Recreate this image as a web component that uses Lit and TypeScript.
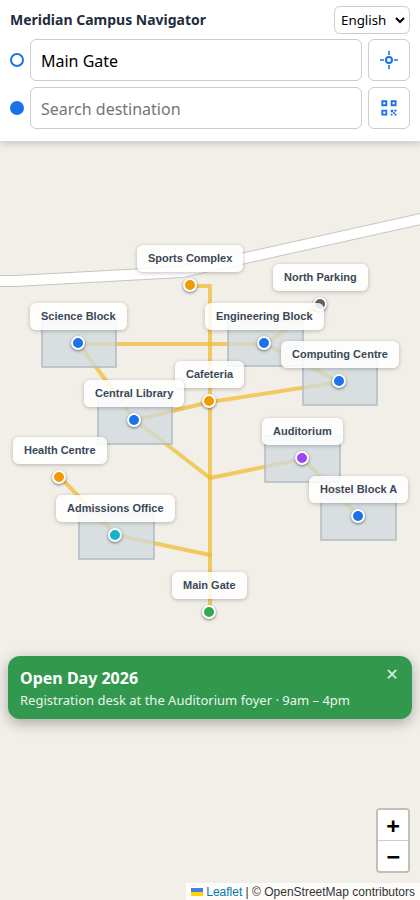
import { LitElement, html, svg, css } from "lit";
import { customElement, property, state } from "lit/decorators.js";

interface Place {
  name: string;
  x: number;
  y: number;
  kind: string;
  building?: [number, number, number, number];
}

const PLACES: Place[] = [
  { name: "Sports Complex", x: 190, y: 285, kind: "amenity" },
  { name: "North Parking", x: 320, y: 304, kind: "parking" },
  { name: "Science Block", x: 78, y: 343, kind: "academic", building: [42, 321, 74, 46] },
  { name: "Engineering Block", x: 264, y: 343, kind: "academic", building: [228, 321, 75, 45] },
  { name: "Computing Centre", x: 339, y: 381, kind: "academic", building: [303, 359, 74, 46] },
  { name: "Cafeteria", x: 209, y: 401, kind: "amenity" },
  { name: "Central Library", x: 134, y: 420, kind: "academic", building: [98, 398, 74, 46] },
  { name: "Auditorium", x: 302, y: 458, kind: "venue", building: [265, 436, 75, 46] },
  { name: "Health Centre", x: 59, y: 477, kind: "amenity" },
  { name: "Hostel Block A", x: 358, y: 516, kind: "academic", building: [321, 494, 75, 46] },
  { name: "Admissions Office", x: 115, y: 535, kind: "office", building: [79, 513, 75, 46] },
  { name: "Main Gate", x: 209, y: 612, kind: "gate" },
];

const PATHS = [
  "M210 612V286H191",
  "M79 344H265",
  "M79 344L135 420L210 478L303 459L359 516",
  "M135 420L210 402L340 382L265 344L321 305",
  "M60 477L116 535L210 555",
];

const ROAD = "M-10 281H15L182 272L430 217";

@customElement("campus-map")
class CampusMap extends LitElement {
  static styles = css`
    :host {
      display: block;
      position: relative;
      overflow: hidden;
      background: #f2efe9;
      font: 12px/18px "Liberation Sans", Arial, sans-serif;
    }
    .canvas {
      position: absolute;
      top: 0;
      left: 50%;
      width: 420px;
      height: 900px;
      margin-left: -210px;
    }
    .ground {
      position: absolute;
      inset: 0;
      overflow: visible;
      fill: none;
      stroke-linecap: round;
      stroke-linejoin: round;
    }
    .casing { stroke: #c4c4c1; stroke-width: 12; }
    .road { stroke: #fff; stroke-width: 10; }
    .path { stroke: #f0b929; stroke-opacity: 0.7; stroke-width: 4; }
    .building {
      fill: #d0d9de;
      fill-opacity: 0.75;
      stroke: #b0bec5;
      stroke-opacity: 0.8;
      stroke-width: 2;
    }
    .pin {
      position: absolute;
      box-sizing: border-box;
      width: 14px;
      height: 14px;
      margin: -7px 0 0 -7px;
      padding: 0;
      border: 2px solid #fff;
      border-radius: 50%;
      box-shadow: 0 1px 3px rgba(0, 0, 0, 0.5);
    }
    .academic { background: #1a73e8; }
    .amenity { background: #f29900; }
    .parking { background: #5f6368; }
    .venue { background: #a142f4; }
    .office { background: #12b5cb; }
    .gate { background: #34a853; }
    .label {
      position: absolute;
      box-sizing: border-box;
      height: 27px;
      margin: -40px 0 0 1px;
      transform: translateX(round(down, -50%, 1px));
      padding: 0 11px;
      border-radius: 6px;
      background: rgba(255, 255, 255, 0.85);
      box-shadow: 0 1px 4px rgba(0, 0, 0, 0.25);
      color: #3b4858;
      font-size: 11px;
      font-weight: 700;
      line-height: 27px;
      white-space: nowrap;
    }
    .corner {
      position: absolute;
      right: 0;
      bottom: 0;
      display: flex;
      flex-direction: column;
      align-items: flex-end;
      gap: 10px;
    }
    .zoom {
      display: flex;
      flex-direction: column;
      margin-right: 10px;
      border: 2px solid rgba(0, 0, 0, 0.2);
      border-radius: 4px;
      background-clip: padding-box;
    }
    .zoom button {
      box-sizing: content-box;
      width: 30px;
      height: 28px;
      padding: 2px 0 0;
      border: 0;
      border-radius: 0 0 2px 2px;
      background: #fff;
      color: #000;
      font: bold 22px/28px "DejaVu Sans Mono", monospace;
    }
    .zoom button:first-child {
      border-bottom: 1px solid #ccc;
      border-radius: 2px 2px 0 0;
    }
    .credit {
      padding: 1px 5px 0;
      background: rgba(255, 255, 255, 0.8);
      color: #333;
      line-height: 16px;
    }
    .credit a { color: #0078a8; text-decoration: none; }
    .flag { width: 12px; height: 8px; }
  `;

  render() {
    return html`
      <div class="canvas">
        <svg class="ground" width="420" height="900" aria-hidden="true">
          <path class="casing" d=${ROAD} />
          <path class="road" d=${ROAD} />
          ${PATHS.map((d) => svg`<path class="path" d=${d} />`)}
          ${PLACES.map(({ building: b }) =>
            b ? svg`<rect class="building" x=${b[0]} y=${b[1]} width=${b[2]} height=${b[3]} />` : null
          )}
        </svg>
        ${PLACES.map((p) => html`<button class="pin ${p.kind}" aria-label=${p.name} style="left:${p.x}px;top:${p.y}px"></button>`)}
        ${PLACES.map((p) => html`<div class="label" style="left:${p.x}px;top:${p.y}px">${p.name}</div>`)}
      </div>
      <div class="corner">
        <div class="zoom">
          <button aria-label="Zoom in">+</button>
          <button aria-label="Zoom out">−</button>
        </div>
        <div class="credit">
          <a href="https://leafletjs.com"><svg class="flag" viewBox="0 0 12 8" aria-hidden="true"><path fill="#4c7be1" d="M0 0h12v4H0z" /><path fill="#ffd500" d="M0 4h12v4H0z" /></svg> Leaflet</a>
          | © OpenStreetMap contributors
        </div>
      </div>
    `;
  }
}

@customElement("search-panel")
class SearchPanel extends LitElement {
  static styles = css`
    :host {
      display: flex;
      flex-direction: column;
      padding: 6px 10px 12px;
      background: #fff;
      box-shadow: 0 2px 8px rgba(0, 0, 0, 0.2);
    }
    .top {
      display: flex;
      align-items: center;
      justify-content: space-between;
      margin-bottom: 5px;
    }
    h1 {
      margin: 0;
      color: #1f2d3d;
      font-size: 14px;
      line-height: 20px;
    }
    .language {
      display: flex;
      position: relative;
    }
    select {
      appearance: none;
      box-sizing: border-box;
      width: 76px;
      height: 28px;
      padding: 0 6px;
      border: 1px solid #ccc;
      border-radius: 6px;
      background: #fff;
      color: #000;
      font-family: "Noto Sans", sans-serif;
    }
    .chevron {
      position: absolute;
      top: 10px;
      right: 5px;
      pointer-events: none;
    }
    .rows {
      display: flex;
      flex-direction: column;
      gap: 6px;
    }
    .row {
      display: flex;
      align-items: center;
      gap: 6px;
    }
    .dot {
      box-sizing: border-box;
      flex: none;
      width: 14px;
      height: 14px;
      border: 2px solid #1a73e8;
      border-radius: 50%;
    }
    .filled { background: #1a73e8; }
    input {
      box-sizing: border-box;
      flex: 1;
      min-width: 0;
      height: 42px;
      padding: 2px 10px 0;
      border: 1px solid #ccc;
      border-radius: 6px;
      background: #fff;
      color: #000;
      font: 16px "Noto Sans", sans-serif;
    }
    input::placeholder { color: #757575; }
    button {
      box-sizing: border-box;
      display: grid;
      place-items: center;
      flex: none;
      width: 42px;
      height: 42px;
      padding: 0;
      border: 1px solid #ccc;
      border-radius: 6px;
      background: #fff;
      color: #1a73e8;
    }
  `;

  render() {
    return html`
      <div class="top">
        <h1>Meridian Campus Navigator</h1>
        <div class="language">
          <select aria-label="Language"><option>English</option></select>
          <svg class="chevron" width="10" height="8" fill="none" stroke="#000" stroke-width="2" aria-hidden="true"><path d="M1 2l4 4 4-4" /></svg>
        </div>
      </div>
      <div class="rows">
        <div class="row">
          <span class="dot"></span>
          <input aria-label="Start" .value=${"Main Gate"} />
          <button aria-label="Use my location">
            <svg width="18" height="18" fill="none" stroke="currentColor" aria-hidden="true">
              <circle cx="9" cy="9" r="3" stroke-width="2" />
              <path d="M9 0v4M9 14v4M0 9h4M14 9h4" stroke-width="1.6" />
            </svg>
          </button>
        </div>
        <div class="row">
          <span class="dot filled"></span>
          <input aria-label="Destination" placeholder="Search destination" />
          <button aria-label="Scan QR code">
            <svg width="18" height="18" fill="none" stroke="currentColor" aria-hidden="true">
              <path d="M2.3 2.3h4v4h-4zM11.600 2.3h4v4h-4zM2.3 11.600h4v4h-4z" stroke-width="1.900" />
              <path d="M10.700 10.700h2.500v2.500h-2.500zM14.200 10.700h2.400v1.700h-2.400zM13 13.200h2v1.500h-2zM10.700 14.800h1.800v1.800h-1.800zM14.600 14.800h2v1.800h-2z" fill="currentColor" stroke="none" />
            </svg>
          </button>
        </div>
      </div>
    `;
  }
}

@customElement("event-banner")
class EventBanner extends LitElement {
  @property() heading = "";
  @property() detail = "";

  static styles = css`
    :host {
      display: flex;
      justify-content: space-between;
      align-items: flex-start;
      padding: 10px 12px 9px;
      border-radius: 12px;
      background: #31984e;
      box-shadow: 0 4px 14px rgba(0, 0, 0, 0.3);
      color: #fff;
    }
    h2 {
      margin: 0;
      font-size: 16px;
      line-height: 24px;
    }
    p {
      margin: 0;
      font-size: 13px;
      line-height: 20px;
      opacity: 0.9;
    }
    button {
      width: 16px;
      height: 16px;
      padding: 0;
      border: 0;
      background: none;
      color: #fff;
      opacity: 0.85;
      font: 16px/16px "Noto Sans", "DejaVu Sans", sans-serif;
    }
  `;

  render() {
    return html`
      <div>
        <h2>${this.heading}</h2>
        <p>${this.detail}</p>
      </div>
      <button aria-label="Close" @click=${() => this.dispatchEvent(new Event("close"))}>✕</button>
    `;
  }
}

@customElement("app-root")
class AppRoot extends LitElement {
  @state() private bannerOpen = true;

  static styles = css`
    :host {
      display: grid;
      grid-template-rows: auto 1fr;
      min-height: 100vh;
      font-family: "Noto Sans", sans-serif;
    }
    campus-map {
      grid-area: 1 / 1 / 3 / 2;
    }
    search-panel {
      grid-area: 1 / 1;
      z-index: 1;
    }
    event-banner {
      grid-area: 2 / 1;
      z-index: 1;
      align-self: end;
      margin: 0 8px 181px;
    }
  `;

  render() {
    return html`
      <campus-map></campus-map>
      <search-panel></search-panel>
      ${this.bannerOpen
        ? html`<event-banner
            heading="Open Day 2026"
            detail="Registration desk at the Auditorium foyer · 9am – 4pm"
            @close=${() => (this.bannerOpen = false)}
          ></event-banner>`
        : null}
    `;
  }
}
